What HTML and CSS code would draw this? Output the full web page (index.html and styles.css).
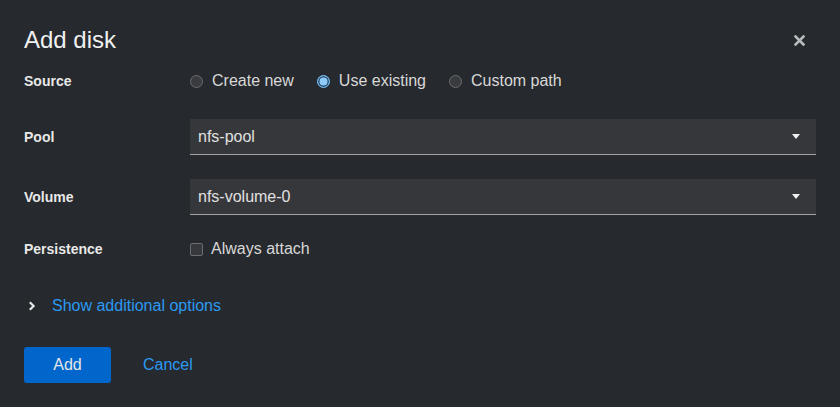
FILE: index.html
```html
<!DOCTYPE html>
<html>
<head>
<meta charset="utf-8">
<link rel="stylesheet" href="styles.css">
</head>
<body>
<div class="modal">
  <header class="header">
    <h1 class="title">Add disk</h1>
    <button class="close" aria-label="Close">
      <svg width="11" height="11" viewBox="0 0 11 11"><path d="M1.5 1.5 L9.5 9.5 M9.5 1.5 L1.5 9.5" stroke="#b8bbbe" stroke-width="2.6" stroke-linecap="square"/></svg>
    </button>
  </header>
  <div class="form">
    <div class="label row-source">Source</div>
    <div class="radios row-source">
      <label class="radio"><span class="dot"></span>Create new</label>
      <label class="radio"><span class="dot checked"></span>Use existing</label>
      <label class="radio"><span class="dot"></span>Custom path</label>
    </div>
    <div class="label">Pool</div>
    <div class="select"><span>nfs-pool</span><span class="caret"></span></div>
    <div class="label">Volume</div>
    <div class="select"><span>nfs-volume-0</span><span class="caret"></span></div>
    <div class="label row-persist">Persistence</div>
    <label class="check row-persist"><span class="box"></span>Always attach</label>
  </div>
  <div class="toggle">
    <svg class="chev" width="8" height="10" viewBox="0 0 8 10"><path d="M1.8 1.2 L5.6 5 L1.8 8.8" fill="none" stroke="#e8e8e8" stroke-width="2.2"/></svg>
    <span class="link">Show additional options</span>
  </div>
  <footer class="footer">
    <button class="btn primary">Add</button>
    <button class="btn linkbtn">Cancel</button>
  </footer>
</div>
</body>
</html>
```
FILE: styles.css
```css
html, body {
  margin: 0;
  padding: 0;
  background: #26292d;
}
body {
  font-family: "Liberation Sans", Arial, sans-serif;
  color: #e0e0e0;
  width: 840px;
  height: 407px;
  overflow: hidden;
}
.modal {
  padding: 24px;
  box-sizing: border-box;
  height: 407px;
}
.header {
  display: flex;
  align-items: center;
  justify-content: space-between;
  height: 32px;
  margin-bottom: 11px;
}
.title {
  margin: 0;
  font-size: 24px;
  font-weight: 400;
  line-height: 32px;
  color: #f0f0f0;
}
.close {
  background: none;
  border: 0;
  padding: 0;
  margin-right: 11px;
  width: 11px;
  height: 11px;
  display: flex;
}
.form {
  display: grid;
  grid-template-columns: 166px 1fr;
  row-gap: 24px;
  align-items: center;
}
.label {
  font-size: 14px;
  font-weight: 700;
  color: #e8e8e8;
}
.row-source { height: 28px; display: flex; align-items: center; }
.row-persist { height: 20px; display: flex; align-items: center; }
.radios {
  display: flex;
  gap: 23px;
}
.radio, .check {
  display: flex;
  align-items: center;
  font-size: 16px;
  color: #d8d8d8;
}
.dot {
  width: 13px;
  height: 13px;
  box-sizing: border-box;
  border-radius: 50%;
  border: 1px solid #6a6e73;
  background: #3a3b3f;
  margin-right: 9px;
}
.dot.checked {
  border: 1.5px solid #73bcf7;
  background: #8fcbfa;
  box-shadow: inset 0 0 0 1.5px #2d4f6e;
}
.check .box {
  width: 13px;
  height: 13px;
  box-sizing: border-box;
  border: 1px solid #6a6e73;
  border-radius: 2px;
  background: #37383c;
  margin-right: 8px;
}
.select {
  height: 36px;
  box-sizing: border-box;
  background: #36373b;
  border-bottom: 1px solid #a0a2a5;
  display: flex;
  align-items: center;
  justify-content: space-between;
  padding: 0 16px 0 8px;
  font-size: 16px;
  color: #e0e0e0;
}
.caret {
  width: 0;
  height: 0;
  border-left: 4px solid transparent;
  border-right: 4px solid transparent;
  border-top: 5px solid #f0f0f0;
}
.toggle {
  display: flex;
  align-items: center;
  height: 24px;
  margin-top: 35px;
  font-size: 16px;
}
.chev {
  margin-left: 4px;
  margin-right: 16px;
}
.link {
  color: #2b9af3;
}
.footer {
  display: flex;
  align-items: center;
  gap: 8px;
  margin-top: 29px;
}
.btn {
  font-family: inherit;
  font-size: 16px;
  height: 36px;
  border: 0;
  border-radius: 3px;
  padding: 0 24px;
}
.primary {
  background: #0066cc;
  color: #e6e6e6;
  width: 87px;
}
.linkbtn {
  background: none;
  color: #2b9af3;
  padding: 0 24px;
}
```
